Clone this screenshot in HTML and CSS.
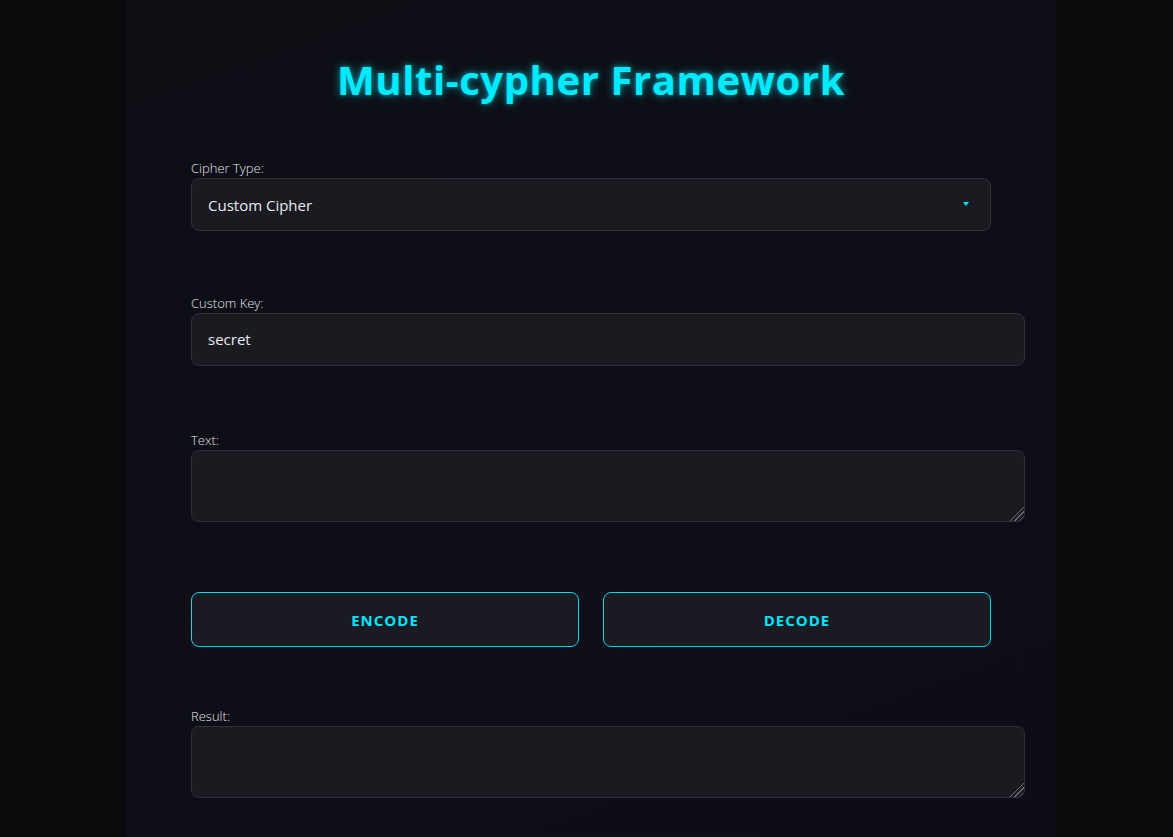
FILE: index.html
```html
<!DOCTYPE html>
<html lang="en">
<head>
<meta charset="utf-8">
<title>Multi-cypher Framework</title>
<link rel="stylesheet" href="styles.css">
</head>
<body>
<main class="app">
  <h1 class="title">Multi-cypher Framework</h1>

  <div class="field field-select">
    <label class="label" for="cipher">Cipher Type:</label>
    <div class="select-wrap">
      <select id="cipher" class="select">
        <option>Custom Cipher</option>
      </select>
      <span class="arrow"></span>
    </div>
  </div>

  <div class="field field-key">
    <label class="label" for="key">Custom Key:</label>
    <input id="key" class="input" type="text" value="secret">
  </div>

  <div class="field field-text">
    <label class="label" for="text">Text:</label>
    <textarea id="text" class="input area"></textarea>
  </div>

  <div class="buttons">
    <button class="btn">ENCODE</button>
    <button class="btn">DECODE</button>
  </div>

  <div class="field field-result">
    <label class="label" for="result">Result:</label>
    <textarea id="result" class="input area" readonly></textarea>
  </div>
</main>
</body>
</html>
```

FILE: styles.css
```css
html, body {
  margin: 0;
  padding: 0;
}

body {
  background: #0b0b0e;
  font-family: "Open Sans", "Noto Sans", sans-serif;
  color: #e0e0e0;
}

.app {
  box-sizing: border-box;
  width: 930px;
  margin-left: 126px;
  padding: 52px 65px 20px;
  min-height: 837px;
  background: linear-gradient(160deg, #0e0f15 0%, #0c0d17 100%);
}

.title {
  margin: 0 0 52px;
  text-align: center;
  font-size: 40px;
  font-weight: 700;
  letter-spacing: 0.6px;
  line-height: 56px;
  color: #00eaff;
  text-shadow: 0 0 10px rgba(0, 234, 255, 0.55), 0 0 4px rgba(0, 234, 255, 0.35);
}

.field-select {
  margin-bottom: 64px;
}

.field-key {
  margin-bottom: 66px;
}

.field-text {
  margin-bottom: 0;
}

.label {
  display: block;
  font-size: 13px;
  font-weight: 300;
  color: #e4e4ea;
  line-height: 16px;
  margin-bottom: 2px;
}

.select-wrap {
  position: relative;
  width: 800px;
}

.select {
  appearance: none;
  -webkit-appearance: none;
  width: 800px;
  height: 53px;
  box-sizing: border-box;
  padding: 0 16px;
  background: #1a1b21;
  border: 1px solid #2f3037;
  border-radius: 8px;
  color: #eaeaee;
  font-family: inherit;
  font-size: 15px;
  outline: none;
}

.arrow {
  position: absolute;
  right: 22px;
  top: 24px;
  width: 0;
  height: 0;
  border-left: 3px solid transparent;
  border-right: 3px solid transparent;
  border-top: 4px solid #00e5ff;
}

.input {
  display: block;
  box-sizing: content-box;
  width: 100%;
  height: 19px;
  padding: 16px;
  background: #1a1b21;
  border: 1px solid #2f3037;
  border-radius: 8px;
  color: #eaeaee;
  font-family: inherit;
  font-size: 15px;
  line-height: 19px;
  outline: none;
}

.area {
  height: 38px;
  resize: vertical;
}

.area::-webkit-resizer {
  background:
    linear-gradient(135deg, #1a1b21 0 52%, transparent 52%),
    repeating-linear-gradient(135deg, transparent 0 2px, #6a6a72 2px 3px);
  border-bottom-right-radius: 8px;
}

.buttons {
  display: grid;
  grid-template-columns: 1fr 1fr;
  gap: 24px;
  margin-top: 70px;
  margin-bottom: 61px;
}

.btn {
  height: 55px;
  background: #1a1b22;
  border: 1px solid #00d8f0;
  border-radius: 8px;
  color: #00e5ff;
  font-family: inherit;
  font-size: 15px;
  font-weight: 700;
  letter-spacing: 1px;
  cursor: pointer;
}
```
